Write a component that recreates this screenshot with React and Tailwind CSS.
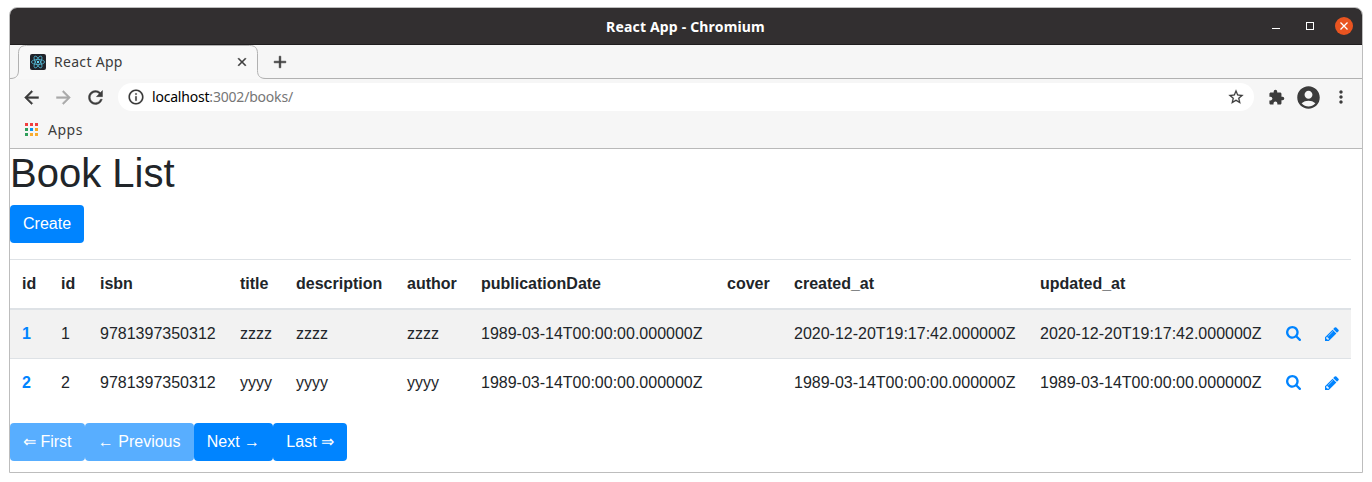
import React from "react";
import {
  MdArrowBack,
  MdArrowForward,
  MdRefresh,
  MdInfoOutline,
  MdStarBorder,
  MdExtension,
  MdAccountCircle,
  MdMoreVert,
  MdClose,
  MdAdd,
} from "react-icons/md";

const columns = [
  ["id", "w-[39px]"],
  ["id", "w-[39px]"],
  ["isbn", "w-[140px]"],
  ["title", "w-[56px]"],
  ["description", "w-[111px]"],
  ["author", "w-[74px]"],
  ["publicationDate", "w-[246px]"],
  ["cover", "w-[67px]"],
  ["created_at", "w-[246px]"],
  ["updated_at", "w-[246px]"],
  ["", "w-[39px]"],
  ["", "w-[38px]"],
];

const books = [
  ["1", "9781397350312", "zzzz", "zzzz", "zzzz", "1989-03-14T00:00:00.000000Z", "", "2020-12-20T19:17:42.000000Z", "2020-12-20T19:17:42.000000Z"],
  ["2", "9781397350312", "yyyy", "yyyy", "yyyy", "1989-03-14T00:00:00.000000Z", "", "1989-03-14T00:00:00.000000Z", "1989-03-14T00:00:00.000000Z"],
];

function SearchIcon() {
  return (
    <svg className="mb-px h-[15px] w-[15px] fill-current" viewBox="0 0 1664 1664">
      <path d="M1152 704q0-185-131.500-316.500t-316.500-131.500-316.500 131.500-131.500 316.500 131.500 316.500 316.500 131.500 316.500-131.500 131.500-316.500zm512 832q0 52-38 90t-90 38q-54 0-90-38l-343-342q-179 124-399 124-143 0-273.500-55.500t-225-150-150-225-55.500-273.500 55.500-273.500 150-225 225-150 273.500-55.500 273.500 55.500 225 150 150 225 55.500 273.500q0 220-124 399l343 343q37 37 37 90z" />
    </svg>
  );
}

function PencilIcon() {
  return (
    <svg className="mb-px h-[14px] w-[14px] fill-current" viewBox="0 0 1536 1536">
      <path d="M363 1408l91-91-235-235-91 91v107h128v128h107zm523-928q0-22-22-22-10 0-17 7l-542 542q-7 7-7 17 0 22 22 22 10 0 17-7l542-542q7-7 7-17zm-54-192l416 416-832 832h-416v-416zm683 96q0 53-37 90l-166 166-416-416 166-165q36-38 90-38 53 0 91 38l235 234q37 39 37 91z" />
    </svg>
  );
}

function Favicon() {
  return (
    <svg className="h-4 w-4 shrink-0" viewBox="0 0 16 16">
      <rect width="16" height="16" rx="2" fill="#20232a" />
      <g fill="none" stroke="#53b8d4" strokeWidth="0.8">
        <ellipse cx="8" cy="8" rx="6.600" ry="2.500" />
        <ellipse cx="8" cy="8" rx="6.600" ry="2.500" transform="rotate(60 8 8)" />
        <ellipse cx="8" cy="8" rx="6.600" ry="2.500" transform="rotate(120 8 8)" />
      </g>
      <circle cx="8" cy="8" r="1.200" fill="#61dafb" />
    </svg>
  );
}

function TitleBar() {
  return (
    <header className="grid h-[37px] shrink-0 grid-cols-[1fr_auto_1fr] items-center border-b border-[#1f1d1e] bg-[#322f30] text-white">
      <span />
      <span className="mt-px pr-px font-['Noto_Sans',sans-serif] text-[14px] leading-5 font-bold tracking-[0.17px]">React App - Chromium</span>
      <div className="flex items-center justify-end pr-[9px]">
        <span className="mt-[5px] mr-[26px] h-px w-2 bg-white" />
        <span className="mr-[21px] h-2 w-2 border border-white" />
        <span className="flex h-[18px] w-[18px] items-center justify-center rounded-full bg-[#e95420]">
          <svg className="h-2 w-2" viewBox="0 0 8 8" stroke="white" strokeWidth="1.300">
            <path d="M.5.5l7 7M7.500.5l-7 7" />
          </svg>
        </span>
      </div>
    </header>
  );
}

function TabStrip() {
  return (
    <div className="relative flex h-[34px] shrink-0 items-center border-b border-[#b1b1b1] bg-[#f6f6f6] font-['Noto_Sans',sans-serif] text-[#3c3c3c]">
      <svg className="absolute top-0 left-0 h-[34px] w-[256px]" viewBox="0 0 256 34">
        <path d="M0 33.500C6 33.500 8.500 31 8.500 25V8.500C8.500 3 11 .5 16.500.5H239.500C245 .5 247.500 3 247.500 8.500V25.500C247.500 31 250 33.500 256 33.500V34H0Z" fill="#f8f8f8" />
        <path d="M0 33.500C6 33.500 8.500 31 8.500 25V8.500C8.500 3 11 .5 16.500.5H239.500C245 .5 247.500 3 247.500 8.500V25.500C247.500 31 250 33.500 256 33.500" fill="none" stroke="#b1b1b1" />
      </svg>
      <span className="absolute top-[33px] left-[7px] h-px w-[242px] bg-[#f8f8f8]" />
      <div className="relative flex h-full w-[248px] items-center pl-5">
        <Favicon />
        <span className="ml-2 flex-1 text-[14px] leading-5 tracking-[0.3px]">React App</span>
        <MdClose className="mr-[9px] h-[14px] w-[14px] stroke-current stroke-[0.8] [&>[fill=none]]:hidden" />
      </div>
      <MdAdd className="relative ml-3 h-5 w-5 stroke-current stroke-[0.6] [&>[fill=none]]:hidden" />
    </div>
  );
}

function Toolbar() {
  return (
    <div className="flex h-[36px] shrink-0 items-center bg-[#f6f6f6] pl-[11px] text-[#3c3c3c]">
      <MdArrowBack className="h-[21px] w-[21px] stroke-current stroke-[0.5] [&>[fill=none]]:hidden" />
      <MdArrowForward className="ml-[11px] h-[21px] w-[21px] stroke-current stroke-[0.5] text-[#a9a9a9] [&>[fill=none]]:hidden" />
      <MdRefresh className="ml-[11px] h-[21px] w-[21px] stroke-current stroke-[0.5] [&>[fill=none]]:hidden" />
      <div className="ml-3 flex h-7 w-[1136px] items-center rounded-full bg-white pr-[9px] pl-[9px]">
        <MdInfoOutline className="h-[18px] w-[18px] stroke-current stroke-[0.2] [&>[fill=none]]:hidden" />
        <span className="ml-[7px] flex-1 font-['Noto_Sans',sans-serif] text-[14px] leading-5 tracking-[-0.2px] text-[#767676]">
          <span className="text-black">localhost</span>:3002/books/
        </span>
        <MdStarBorder className="h-[18px] w-[18px] stroke-current stroke-[0.2] [&>[fill=none]]:hidden" />
      </div>
      <MdExtension className="ml-[14px] h-[17px] w-[17px]" />
      <MdAccountCircle className="ml-[9.500px] h-[27px] w-[27px]" />
      <MdMoreVert className="ml-[9px] h-5 w-5" />
    </div>
  );
}

function BookmarksBar() {
  const colors = [
    "bg-[#f23f3f]", "bg-[#f23f3f]", "bg-[#f23f3f]",
    "bg-[#2f9e5b]", "bg-[#0a95f0]", "bg-[#f5a623]",
    "bg-[#2f9e5b]", "bg-[#f9ac2f]", "bg-[#f9ac2f]",
  ];
  return (
    <div className="flex h-[34px] shrink-0 items-center border-b border-[#b9b9b9] bg-[#f6f6f6] pb-1 pl-[15px] text-[#3c3c3c]">
      <div className="grid grid-cols-[repeat(3,3px)] gap-[2px]">
        {colors.map((c, i) => (
          <span key={i} className={`h-[3px] w-[3px] ${c}`} />
        ))}
      </div>
      <span className="ml-[10px] font-['Noto_Sans',sans-serif] text-[14px] leading-5 tracking-[0.5px]">Apps</span>
    </div>
  );
}

function Button({ children, disabled }) {
  return (
    <button
      disabled={disabled}
      className="h-[38px] rounded-[4px] bg-[#0084ff] px-[13px] text-base leading-6 whitespace-nowrap text-white disabled:opacity-65"
    >
      {children}
    </button>
  );
}

function BookTable() {
  return (
    <table className="mt-4 w-[1341px] table-fixed border-separate border-spacing-0 text-left whitespace-nowrap">
      <colgroup>
        {columns.map(([, w], i) => (
          <col key={i} className={w} />
        ))}
      </colgroup>
      <thead>
        <tr>
          {columns.map(([name], i) => (
            <th key={i} className="h-[51px] border-t border-b-2 border-[#dee2e6] py-0 pl-3 leading-6 font-bold">
              {name}
            </th>
          ))}
        </tr>
      </thead>
      <tbody>
        {books.map((book, r) => (
          <tr key={r} className={r === 0 ? "h-12 bg-[#f2f2f2]" : "h-[49px] *:border-t *:border-[#dee2e6]"}>
            <th className="p-0 pl-3 font-bold text-[#0084ff]">{book[0]}</th>
            {book.map((value, i) => (
              <td key={i} className="p-0 pl-3">{value}</td>
            ))}
            <td className="p-0 pl-3 text-[#0084ff]"><SearchIcon /></td>
            <td className="p-0 pl-3 text-[#0084ff]"><PencilIcon /></td>
          </tr>
        ))}
      </tbody>
    </table>
  );
}

export default function App() {
  return (
    <div className="h-[482px] overflow-hidden bg-white pt-[7px] pl-[9px]">
      <div className="flex h-[466px] w-[1354px] flex-col overflow-hidden rounded-t-[8px] border border-[#bdbdbd] bg-white">
        <TitleBar />
        <TabStrip />
        <Toolbar />
        <BookmarksBar />
        <main className="font-['Liberation_Sans',sans-serif] text-base text-[#212529]">
          <h1 className="mb-2 text-[40px] leading-[48px]">Book List</h1>
          <div className="flex"><Button>Create</Button></div>
          <BookTable />
          <nav className="mt-4 flex gap-[0.25px]">
            <Button disabled>⇐ First</Button>
            <Button disabled>← Previous</Button>
            <Button>Next →</Button>
            <Button>Last ⇒</Button>
          </nav>
        </main>
      </div>
    </div>
  );
}
